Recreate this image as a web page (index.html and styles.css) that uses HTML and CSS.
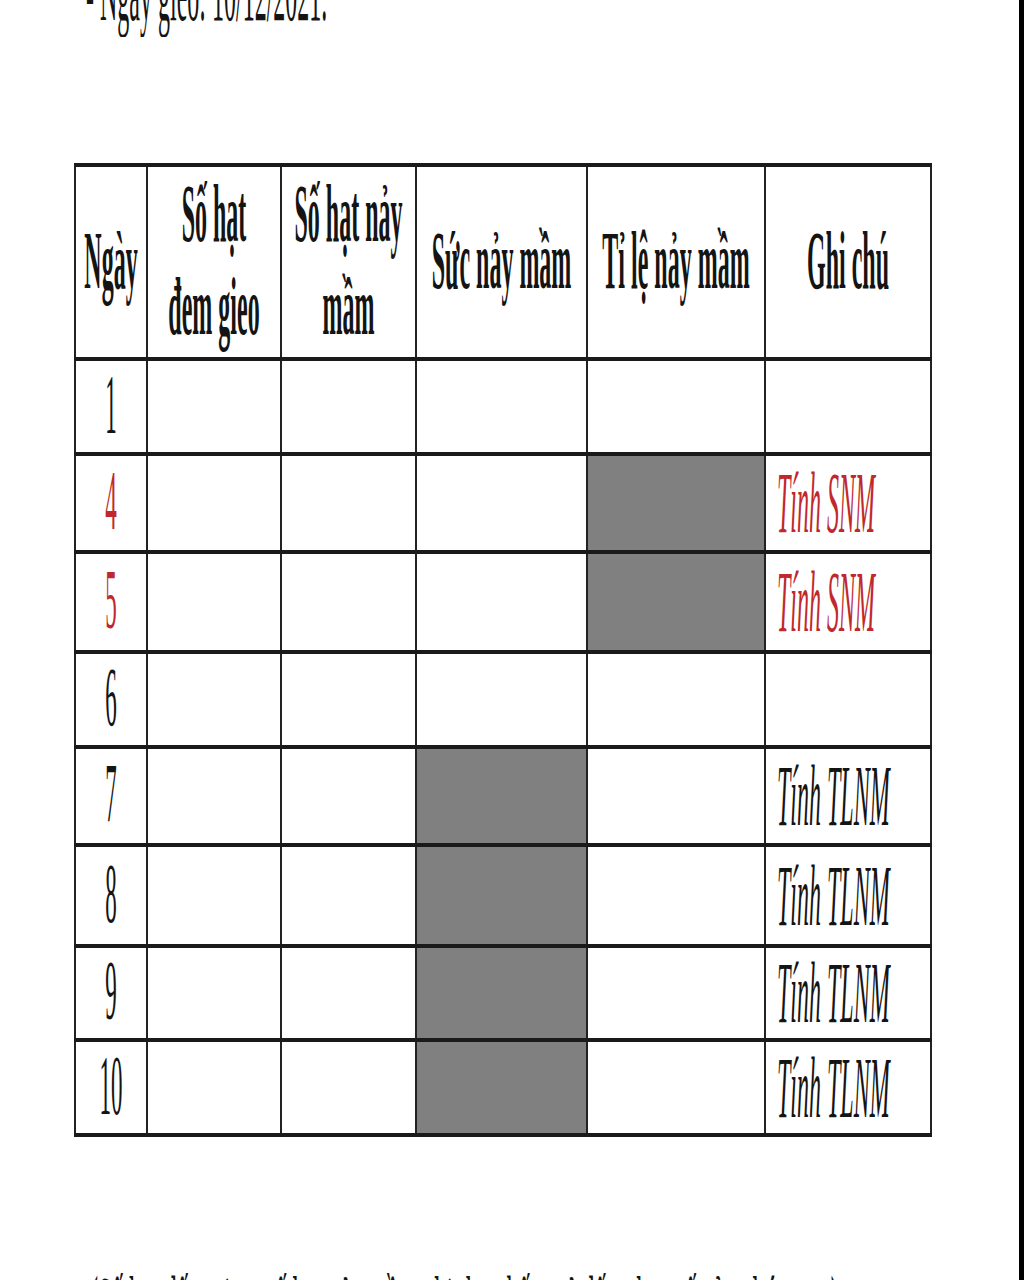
FILE: index.html
```html
<!DOCTYPE html>
<html lang="vi">
<head>
<meta charset="utf-8">
<title>Bảng theo dõi nảy mầm</title>
<link rel="stylesheet" href="styles.css">
</head>
<body>
<div class="page">
  <div class="note"><span class="s">- Ngày gieo: 10/12/2021.</span></div>
  <table class="grid">
    <colgroup>
      <col class="c1"><col class="c2"><col class="c3"><col class="c4"><col class="c5"><col class="c6">
    </colgroup>
    <tr class="head">
      <th><span class="h">Ngày</span></th>
      <th><span class="h">Số hạt<br>đem gieo</span></th>
      <th><span class="h">Số hạt nảy<br>mầm</span></th>
      <th><span class="h">Sức nảy mầm</span></th>
      <th><span class="h">Tỉ lệ nảy mầm</span></th>
      <th><span class="h">Ghi chú</span></th>
    </tr>
    <tr class="r95">
      <td><span class="d">1</span></td><td></td><td></td><td></td><td></td><td></td>
    </tr>
    <tr class="r98">
      <td><span class="d red">4</span></td><td></td><td></td><td></td><td class="gray"></td><td class="gc"><span class="i red">Tính SNM</span></td>
    </tr>
    <tr class="r100">
      <td><span class="d red">5</span></td><td></td><td></td><td></td><td class="gray"></td><td class="gc"><span class="i red">Tính SNM</span></td>
    </tr>
    <tr class="r95">
      <td><span class="d">6</span></td><td></td><td></td><td></td><td></td><td></td>
    </tr>
    <tr class="r98">
      <td><span class="d">7</span></td><td></td><td></td><td class="gray"></td><td></td><td class="gc"><span class="i">Tính TLNM</span></td>
    </tr>
    <tr class="r101">
      <td><span class="d">8</span></td><td></td><td></td><td class="gray"></td><td></td><td class="gc"><span class="i">Tính TLNM</span></td>
    </tr>
    <tr class="r94">
      <td><span class="d">9</span></td><td></td><td></td><td class="gray"></td><td></td><td class="gc"><span class="i">Tính TLNM</span></td>
    </tr>
    <tr class="r95">
      <td><span class="d">10</span></td><td></td><td></td><td class="gray"></td><td></td><td class="gc"><span class="i">Tính TLNM</span></td>
    </tr>
  </table>
  <div class="foot"><span class="s">(Số hạt đếm giao, số hạt nảy mầm ghi theo kết quả đếm thực tế của nhóm em)</span></div>
</div>
</body>
</html>
```

FILE: styles.css
```css
html, body {
  margin: 0;
  padding: 0;
  background: #fff;
  overflow: hidden;
}

.page {
  width: 1024px;
  height: 1280px;
  box-sizing: border-box;
  border-right: 5px solid #000;
  padding-left: 74px;
  overflow: hidden;
  font-family: "Liberation Serif", "Times New Roman", serif;
  color: #141414;
}

.note {
  height: 24px;
  font-size: 24px;
  line-height: 24px;
  padding-left: 12px;
}

.s {
  display: inline-block;
  white-space: nowrap;
  transform: scaleY(3.4);
  transform-origin: 50% 20px;
}

.grid {
  margin-top: 139px;
  border-collapse: collapse;
  table-layout: fixed;
  width: 858px;
}

.c1 { width: 72px; }
.c2 { width: 134px; }
.c3 { width: 135px; }
.c4 { width: 171px; }
.c5 { width: 178px; }
.c6 { width: 166px; }

.grid th,
.grid td {
  border-left: 2px solid #222;
  border-right: 2px solid #222;
  border-top: 4px solid #1a1a1a;
  border-bottom: 4px solid #1a1a1a;
  padding: 0;
  text-align: center;
  vertical-align: middle;
}

.head { height: 194px; }
.r94 { height: 94px; }
.r95 { height: 95px; }
.r98 { height: 98px; }
.r100 { height: 100px; }
.r101 { height: 101px; }

.h {
  display: inline-block;
  white-space: nowrap;
  font-weight: bold;
  font-size: 24px;
  line-height: 27px;
  transform: scaleY(3.45);
}

.d {
  display: inline-block;
  font-size: 23px;
  line-height: 24px;
  transform: scaleY(3.7);
}

.grid td.gc {
  text-align: left;
  padding-left: 11px;
}

.i {
  display: inline-block;
  white-space: nowrap;
  font-style: italic;
  font-size: 24px;
  line-height: 24px;
  transform: scaleY(3.6);
}

.red {
  color: #c0282d;
}

.gray {
  background: #808080;
}

.foot {
  margin-top: 176px;
  padding-left: 16px;
  font-size: 24px;
  line-height: 24px;
}
```
